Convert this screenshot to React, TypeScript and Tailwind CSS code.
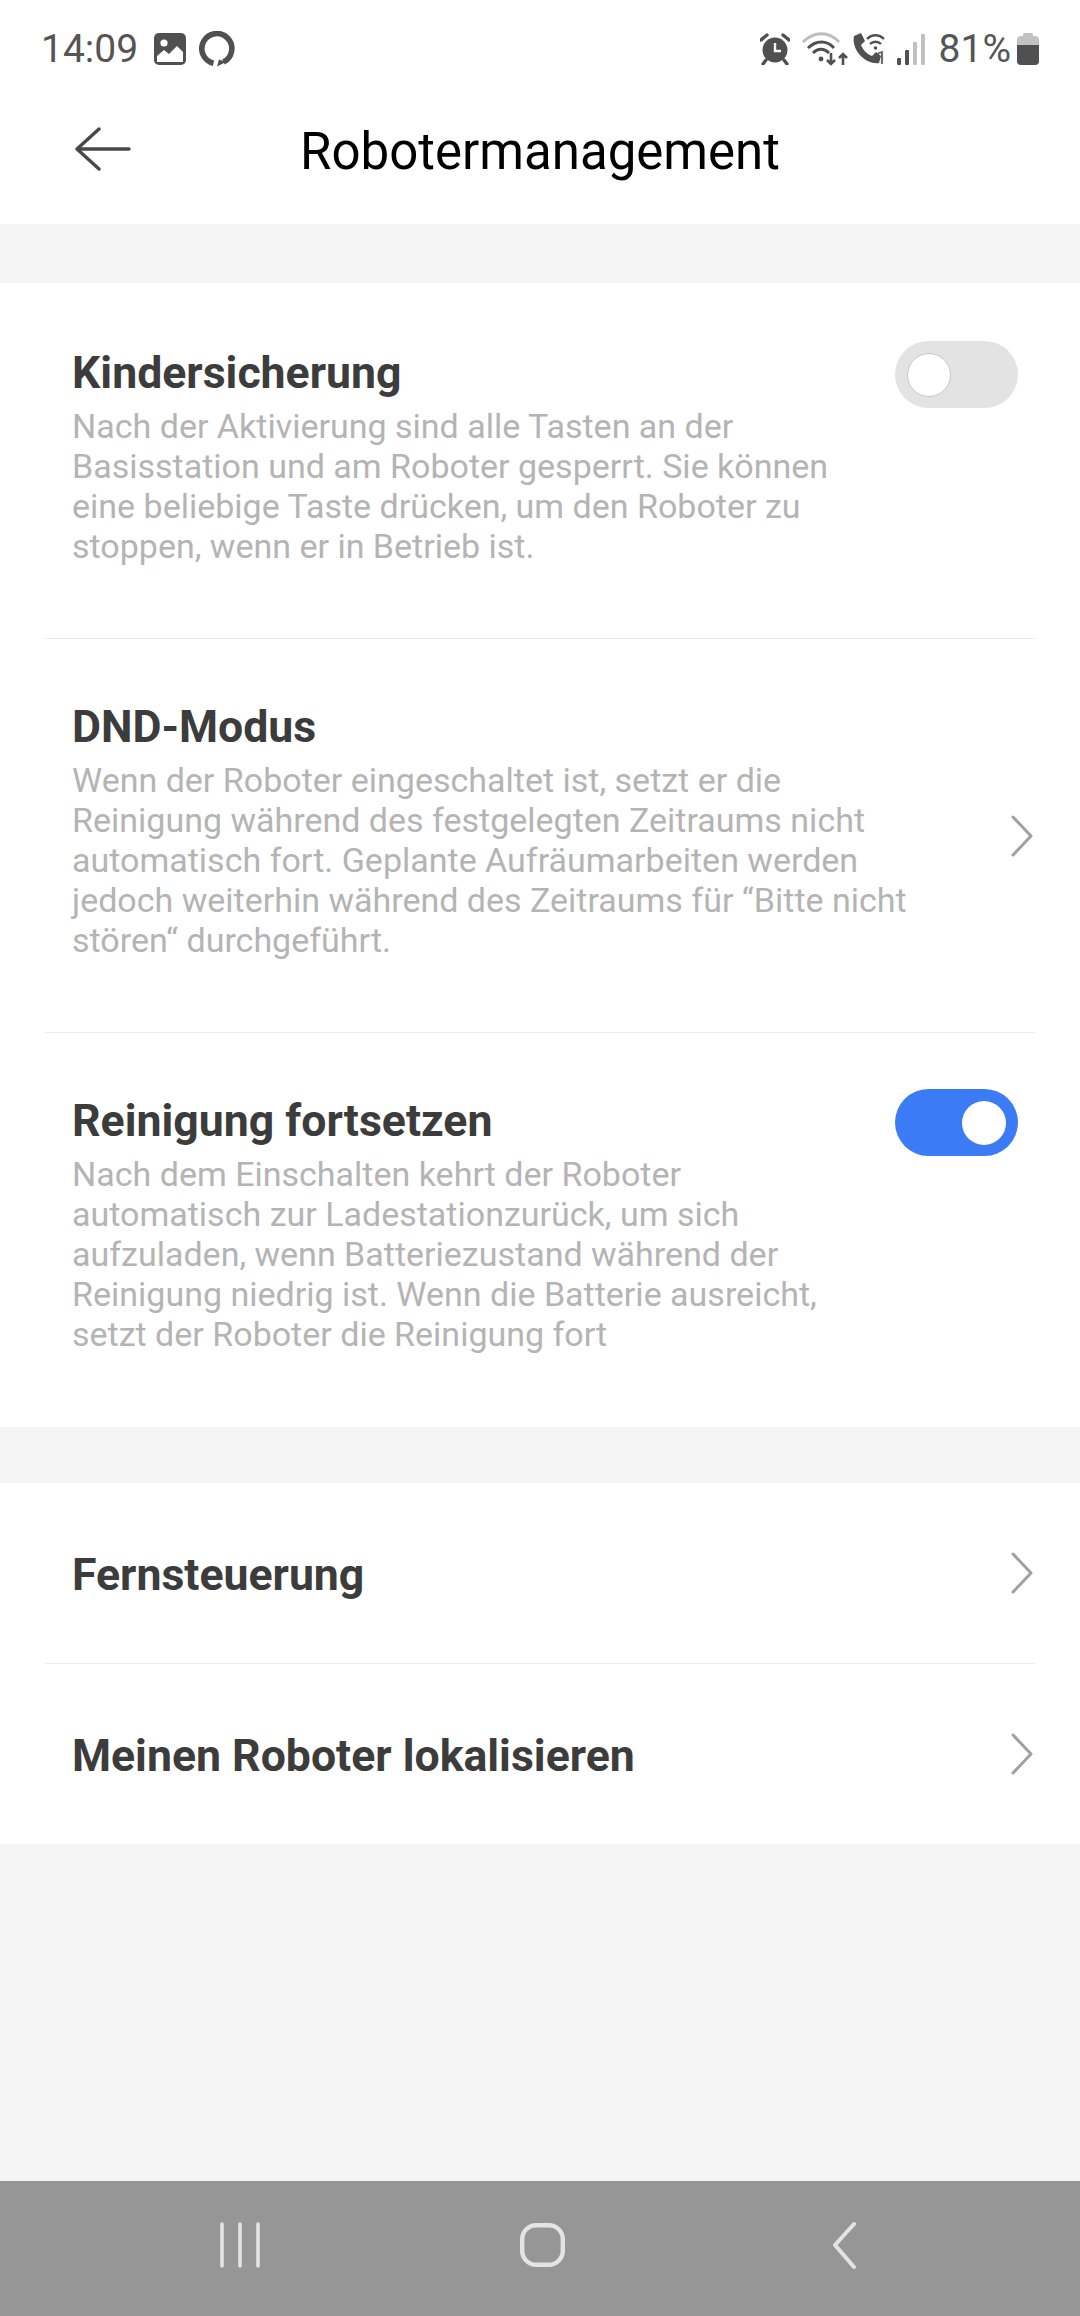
const font = { fontFamily: "Roboto, sans-serif" };

function Toggle({ on }: { on: boolean }) {
  return (
    <div
      className={`flex h-[67px] w-[123px] shrink-0 items-center rounded-full px-[12px] ${
        on ? "justify-end bg-[#3b7bf6]" : "justify-start bg-[#e3e3e3]"
      }`}
    >
      <div className={`h-[44px] w-[44px] rounded-full bg-white ${on ? "" : "border border-[#c8c8c8]"}`} />
    </div>
  );
}

function Chevron() {
  return (
    <svg width="24" height="44" viewBox="0 0 24 44" fill="none" className="shrink-0">
      <path d="M3 3 L21 22 L3 41" stroke="#a0a0a0" strokeWidth="3" strokeLinecap="round" strokeLinejoin="round" />
    </svg>
  );
}

function Divider() {
  return <div className="mx-[45px] h-px bg-[#ececec]" />;
}

function SettingRow({
  title,
  lines,
  toggle,
  chevron,
  className,
}: {
  title: string;
  lines: string[];
  toggle?: boolean;
  chevron?: boolean;
  className: string;
}) {
  return (
    <div className={`flex justify-between pl-[72px] ${className}`}>
      <div>
        <div className="text-[44.6px] leading-[54px] font-bold whitespace-nowrap text-[#3c3c3c]">{title}</div>
        <div className="mt-[6px] text-[34px] leading-[40px] whitespace-nowrap text-[#b4b4b4]">
          {lines.map((l) => (
            <div key={l}>{l}</div>
          ))}
        </div>
      </div>
      {toggle !== undefined && (
        <div className="mr-[62px] -mt-[5px]">
          <Toggle on={toggle} />
        </div>
      )}
      {chevron && (
        <div className="mr-[46px] -mt-[60px] flex items-center">
          <Chevron />
        </div>
      )}
    </div>
  );
}

function LinkRow({ title }: { title: string }) {
  return (
    <div className="flex h-[180px] items-center justify-between pr-[46px] pl-[72px]">
      <div className="pt-[3px] text-[44.6px] leading-[54px] font-bold text-[#3c3c3c]">{title}</div>
      <Chevron />
    </div>
  );
}

function StatusBar() {
  return (
    <div className="flex h-[100px] items-start justify-between pt-[26px] pr-[41px] pl-[41px] text-[#555555]">
      <div className="flex items-center">
        <span className="text-[39px] leading-[46px]">14:09</span>
        <svg width="32" height="32" viewBox="0 0 32 32" className="ml-[16px]">
          <rect x="0" y="0" width="32" height="32" rx="5" fill="#505050" />
          <circle cx="10" cy="10" r="3.6" fill="#fff" />
          <path d="M3 29 V23 L10 17 L15 21 L23 13 L29 19 V29 Z" fill="#fff" />
          <path d="M5 26 L10 20.5 L15 24.5 L23 16.5 L27 20.5 V26 Z" fill="#fff" />
        </svg>
        <svg width="36" height="36" viewBox="0 0 36 36" className="ml-[13px]">
          <path d="M14.5 32.2 A15 15 0 1 1 24.5 31" fill="none" stroke="#505050" strokeWidth="5.6" />
          <path d="M18 35.5 L27 31 L20 28.5 Z" fill="#505050" />
        </svg>
      </div>
      <div className="flex items-center">
        <svg width="30" height="32" viewBox="0 0 30 32" className="mr-[12px]">
          <circle cx="15" cy="17" r="12.5" fill="#505050" />
          <path d="M15 10 V18 H21" stroke="#fff" strokeWidth="2.4" fill="none" />
          <path d="M1 7 L7 2 M29 7 L23 2" stroke="#505050" strokeWidth="3.4" strokeLinecap="round" />
          <path d="M6 27 L3 31 M24 27 L27 31" stroke="#505050" strokeWidth="3.4" strokeLinecap="round" />
        </svg>
        <svg width="46" height="34" viewBox="0 0 46 34" className="mr-[4px]">
          <path d="M1 10 C12 -1 27 -1 37 10" fill="none" stroke="#bdbdbd" strokeWidth="3" />
          <path d="M6 16 C14 8 25 8 32 16" fill="none" stroke="#505050" strokeWidth="3" />
          <path d="M11 21 C16 16 22 16 27 21" fill="none" stroke="#505050" strokeWidth="3" />
          <circle cx="19" cy="27" r="2.4" fill="#505050" />
          <path d="M29 21 V32 M25 28 L29 32 L33 28" fill="none" stroke="#505050" strokeWidth="2.6" />
          <path d="M41 33 V22 M37 26 L41 22 L45 26" fill="none" stroke="#505050" strokeWidth="2.6" />
        </svg>
        <div className="relative mr-[10px] h-[34px] w-[35px]">
          <svg width="35" height="34" viewBox="0 0 35 34">
            <path d="M2 4 L9 1 L13 9 L9 13 C11 18 15 22 20 24 L24 20 L29 24 L27 31 C14 33 -1 18 2 4 Z" fill="#505050" />
            <path d="M15 7 C20 2 27 2 32 7 M18 12 C21 9 26 9 29 12" fill="none" stroke="#505050" strokeWidth="2.4" />
            <circle cx="23.5" cy="16" r="1.8" fill="#505050" />
          </svg>
          <span className="absolute right-0 -bottom-[2px] text-[19px] leading-[20px]">1</span>
        </div>
        <svg width="28" height="32" viewBox="0 0 28 32" className="mr-[14px]">
          <rect x="0" y="25" width="4" height="7" rx="1" fill="#505050" />
          <rect x="8" y="17" width="4" height="15" rx="1" fill="#505050" />
          <rect x="16" y="9" width="4" height="23" rx="1" fill="#c0c0c0" />
          <rect x="24" y="1" width="4" height="31" rx="1" fill="#c0c0c0" />
        </svg>
        <span className="text-[39px] leading-[46px]">81%</span>
        <svg width="22" height="32" viewBox="0 0 22 32" className="ml-[6px]">
          <path d="M6 3 V1.5 Q6 0 7.5 0 H14.5 Q16 0 16 1.5 V3 H18 Q22 3 22 7 V14 H0 V7 Q0 3 4 3 Z" fill="#c2c2c2" />
          <path d="M0 12 H22 V28 Q22 32 18 32 H4 Q0 32 0 28 Z" fill="#505050" />
        </svg>
      </div>
    </div>
  );
}

export default function App() {
  return (
    <div className="flex h-[2316px] w-[1080px] flex-col bg-[#f5f5f5]" style={font}>
      <div className="h-[224px] bg-white">
        <StatusBar />
        <div className="relative flex h-[124px] items-center justify-center pb-[20px]">
          <svg width="56" height="44" viewBox="0 0 56 44" className="absolute top-[27px] left-[75px]">
            <path d="M24 2 L2 22 L24 42 M2 22 H54" fill="none" stroke="#484848" strokeWidth="3.4" strokeLinecap="round" strokeLinejoin="round" />
          </svg>
          <div className="text-[51px] leading-[60px] text-black">Robotermanagement</div>
        </div>
      </div>

      <div className="mt-[59px] bg-white">
        <SettingRow
          className="h-[355px] pt-[63px]"
          title="Kindersicherung"
          toggle={false}
          lines={[
            "Nach der Aktivierung sind alle Tasten an der",
            "Basisstation und am Roboter gesperrt. Sie können",
            "eine beliebige Taste drücken, um den Roboter zu",
            "stoppen, wenn er in Betrieb ist.",
          ]}
        />
        <Divider />
        <SettingRow
          className="h-[393px] pt-[61px]"
          title="DND-Modus"
          chevron
          lines={[
            "Wenn der Roboter eingeschaltet ist, setzt er die",
            "Reinigung während des festgelegten Zeitraums nicht",
            "automatisch fort. Geplante Aufräumarbeiten werden",
            "jedoch weiterhin während des Zeitraums für “Bitte nicht",
            "stören“ durchgeführt.",
          ]}
        />
        <Divider />
        <SettingRow
          className="h-[394px] pt-[61px]"
          title="Reinigung fortsetzen"
          toggle={true}
          lines={[
            "Nach dem Einschalten kehrt der Roboter",
            "automatisch zur Ladestationzurück, um sich",
            "aufzuladen, wenn Batteriezustand während der",
            "Reinigung niedrig ist. Wenn die Batterie ausreicht,",
            "setzt der Roboter die Reinigung fort",
          ]}
        />
      </div>

      <div className="mt-[56px] bg-white">
        <LinkRow title="Fernsteuerung" />
        <Divider />
        <LinkRow title="Meinen Roboter lokalisieren" />
      </div>

      <div className="mt-auto flex h-[135px] items-start bg-[#969696] pt-[40px] pl-[218px]">
        <svg width="44" height="48" viewBox="0 0 44 48">
          <path d="M4 3 V45 M22 3 V45 M40 3 V45" stroke="#e4e4e4" strokeWidth="3.6" strokeLinecap="round" />
        </svg>
        <svg width="48" height="48" viewBox="0 0 48 48" className="ml-[256px]">
          <rect x="4.2" y="4.2" width="40.6" height="39.6" rx="14" fill="none" stroke="#e4e4e4" strokeWidth="4.4" />
        </svg>
        <svg width="26" height="48" viewBox="0 0 26 48" className="ml-[265px]">
          <path d="M23 3 L4 24 L23 46" fill="none" stroke="#e4e4e4" strokeWidth="4" strokeLinecap="round" strokeLinejoin="round" />
        </svg>
      </div>
    </div>
  );
}
